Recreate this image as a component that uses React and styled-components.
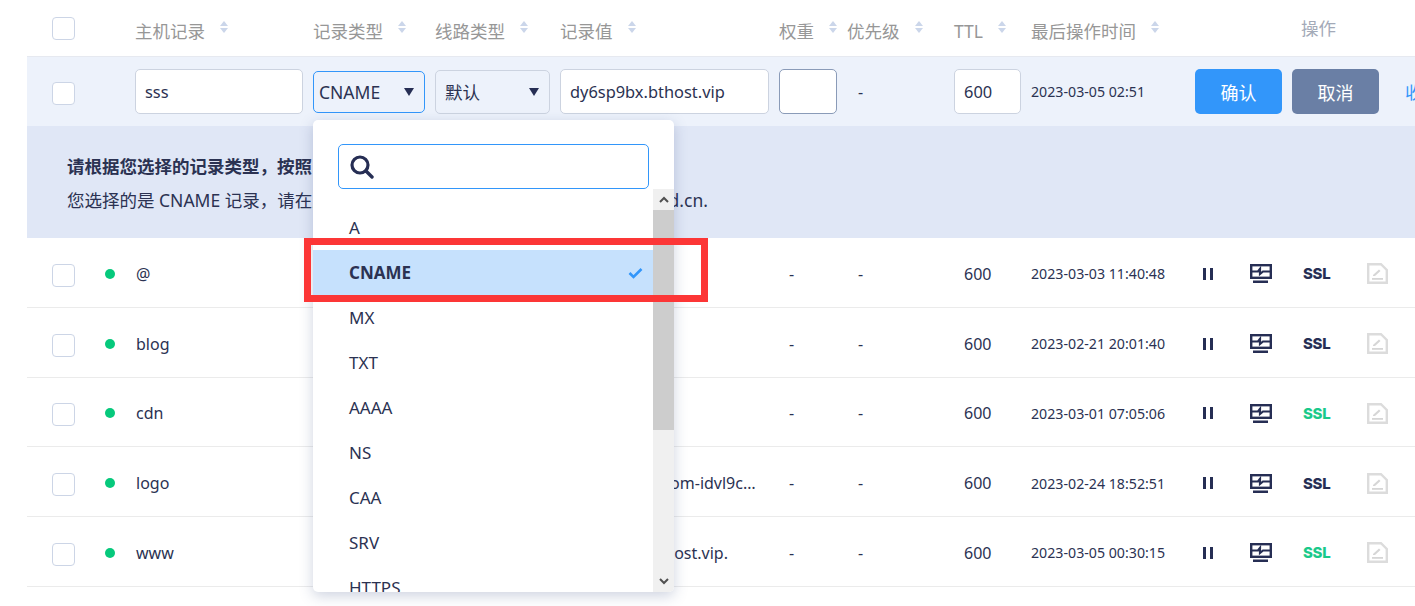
import styled, { createGlobalStyle } from 'styled-components';

const GlobalStyle = createGlobalStyle`
html, body {
    margin: 0;
    padding: 0;
    background: #fff;
    overflow: hidden;
}
body {
    font-family: "Noto Sans", "Noto Sans CJK SC", sans-serif;
    color: #2b3252;
}
`;

const records = [
    { host: '@', value: 'd6.bthost.vip', time: '2023-03-03 11:40:48' },
    { host: 'blog', value: 'd6.bthost.vip', time: '2023-02-21 20:01:40' },
    { host: 'cdn', value: 'd6.bthost.vip', time: '2023-03-01 07:05:06', sslOn: true },
    { host: 'logo', value: 'logo.aliyuncs.com-idvl9cxxxxxx', time: '2023-02-24 18:52:51' },
    { host: 'www', value: 'dy6isp9bxx.bthost.vip.', time: '2023-03-05 00:30:15', sslOn: true },
];

const columns = ['主机记录', '记录类型', '线路类型', '记录值', '权重', '优先级', 'TTL', '最后操作时间'];
const typeOptions = ['A', 'CNAME', 'MX', 'TXT', 'AAAA', 'NS', 'CAA', 'SRV', 'HTTPS'];

const SortIcon = () => (
    <SortSvg width="8" height="12" viewBox="0 0 8 12">
        <path d="M4 0 L8 5 H0 Z" fill="#cbd6ea" />
        <path d="M4 12 L8 7 H0 Z" fill="#cbd6ea" />
    </SortSvg>
);

const PauseIcon = () => (
    <svg width="10" height="12" viewBox="0 0 10 12">
        <rect x="0" y="0" width="3" height="12" fill="#262e54" />
        <rect x="7" y="0" width="3" height="12" fill="#262e54" />
    </svg>
);

const MonitorIcon = () => (
    <svg width="22" height="19" viewBox="0 0 22 19">
        <rect x="1.2" y="1.2" width="19.6" height="12.6" fill="#fff" stroke="#262e54" strokeWidth="2.4" />
        <path d="M2 7.5 H8 L10 5 V10 L13 7.5 H20" fill="none" stroke="#262e54" strokeWidth="2.2" />
        <rect x="3" y="16.5" width="15" height="2.5" fill="#262e54" />
    </svg>
);

const EditIcon = () => (
    <svg width="21" height="21" viewBox="0 0 21 21">
        <path d="M1.2 1.2 H14 L19.8 7 V19.8 H1.2 Z" fill="none" stroke="#dcdcdc" strokeWidth="2.4" />
        <path d="M6 12 L12 6.5 L13.5 8 L8 13 H6 Z" fill="#d6d6d6" />
        <rect x="5" y="15" width="11" height="1.8" fill="#d6d6d6" />
    </svg>
);

const SearchIcon = () => (
    <svg width="24" height="24" viewBox="0 0 24 24">
        <circle cx="10" cy="10" r="8" fill="none" stroke="#262e54" strokeWidth="3.2" />
        <path d="M16 16 L22 22" stroke="#262e54" strokeWidth="3.4" strokeLinecap="round" />
    </svg>
);

const App = () => {
    return (
        <>
            <GlobalStyle />
            <Page>
                <Table>
                    <HeaderRow>
                        <CheckCell><Checkbox /></CheckCell>
                        {columns.map((name) => (
                            <HeaderCell key={name} $pull={name === '优先级'}>{name}<SortIcon /></HeaderCell>
                        ))}
                        <OpsHeader>操作</OpsHeader>
                    </HeaderRow>

                    <EditRow>
                        <CheckCell $pad={4}><Checkbox /></CheckCell>
                        <Cell><TextField $width="168px" defaultValue="sss" /></Cell>
                        <Cell><SelectBox $width="112px" $active>CNAME<Caret /></SelectBox></Cell>
                        <Cell><SelectBox $width="115px">默认<Caret /></SelectBox></Cell>
                        <Cell><TextField $width="209px" defaultValue="dy6sp9bx.bthost.vip" /></Cell>
                        <Cell><TextField $width="58px" $dark /></Cell>
                        <DashCell>-</DashCell>
                        <Cell><TextField $width="67px" defaultValue="600" /></Cell>
                        <TimeCell>2023-03-05 02:51</TimeCell>
                        <EditActions>
                            <ActionButton $bg="#3296fa">确认</ActionButton>
                            <ActionButton $bg="#6a7fa5">取消</ActionButton>
                            <CollapseLink>收起</CollapseLink>
                        </EditActions>
                    </EditRow>

                    <TipPanel>
                        <TipTitle>请根据您选择的记录类型，按照以下说明填写记录值</TipTitle>
                        <TipText>您选择的是 CNAME 记录，请在上方记录值处填写目标域名 www.baihan-cloud.cn.</TipText>
                    </TipPanel>

                    {records.map((r) => (
                        <DataRow key={r.host}>
                            <CheckCell $pad={3}><Checkbox /></CheckCell>
                            <HostCell><StatusDot />{r.host}</HostCell>
                            <Cell />
                            <Cell />
                            <ValueCell>{r.value}</ValueCell>
                            <DashCell $first>-</DashCell>
                            <DashCell>-</DashCell>
                            <TtlCell>600</TtlCell>
                            <TimeCell>{r.time}</TimeCell>
                            <OpsCell>
                                <PauseIcon />
                                <MonitorIcon />
                                <SslLabel $on={r.sslOn}>SSL</SslLabel>
                                <EditIcon />
                            </OpsCell>
                        </DataRow>
                    ))}
                </Table>

                <Dropdown>
                    <SearchBox><SearchIcon /></SearchBox>
                    <OptionArea>
                        <OptionList>
                            {typeOptions.map((opt) => (
                                <Option key={opt} $selected={opt === 'CNAME'}>
                                    {opt}
                                    {opt === 'CNAME' && (
                                        <svg width="15" height="12" viewBox="0 0 15 12">
                                            <path d="M1.5 6 L5.5 10 L13.5 2" fill="none" stroke="#3296fa" strokeWidth="2.6" />
                                        </svg>
                                    )}
                                </Option>
                            ))}
                        </OptionList>
                        <Scrollbar>
                            <ScrollArrow>
                                <svg width="10" height="7" viewBox="0 0 10 7"><path d="M1 6 L5 2 L9 6" fill="none" stroke="#505050" strokeWidth="2" /></svg>
                            </ScrollArrow>
                            <ScrollThumb />
                            <ScrollTrack />
                            <ScrollArrow>
                                <svg width="10" height="7" viewBox="0 0 10 7"><path d="M1 1 L5 5 L9 1" fill="none" stroke="#505050" strokeWidth="2" /></svg>
                            </ScrollArrow>
                        </Scrollbar>
                    </OptionArea>
                </Dropdown>

                <Highlight />
            </Page>
        </>
    );
};

const Page = styled.main`
position: relative;
width: 1415px;
height: 606px;
overflow: hidden;
`;

const Table = styled.div`
margin-left: 27px;
width: 1388px;
`;

const Row = styled.div`
display: grid;
grid-template-columns: 108px 178px 122px 125px 219px 79px 96px 77px 164px 1fr;
align-items: center;
`;

const HeaderRow = styled(Row)`
height: 56px;
border-bottom: 1px solid #e6e9f0;
`;

const EditRow = styled(Row)`
height: 69px;
background: #edf2fb;
`;

const DataRow = styled(Row)`
box-sizing: border-box;
height: 69.75px;
padding-top: 3px;
border-bottom: 1px solid #ebebeb;
font-size: 16px;
`;

const CheckCell = styled.div`
padding-left: 25px;
padding-top: ${(p) => p.$pad || 0}px;
`;

const Checkbox = styled.div`
width: 21px;
height: 21px;
border: 1px solid #ccd5e6;
border-radius: 4px;
background: #fff;
`;

const HeaderCell = styled.div`
display: flex;
align-items: flex-start;
gap: 15px;
margin-left: ${(p) => (p.$pull ? '-11px' : '0')};
font-size: 17.5px;
line-height: 24px;
padding-top: 6px;
color: #979797;
`;

const SortSvg = styled.svg`
margin-top: 2px;
`;

const OpsHeader = styled.div`
font-size: 17.5px;
color: #a3aab8;
padding-left: 106px;
margin-bottom: 2px;
`;

const Cell = styled.div`
min-width: 0;
`;

const TextField = styled.input`
box-sizing: border-box;
display: block;
width: ${(p) => p.$width};
height: 45px;
padding: 0 9px;
background: #fff;
border: 1px solid ${(p) => (p.$dark ? '#8a9bb8' : '#ccd3e0')};
border-radius: 5px;
font-family: inherit;
font-size: 16.4px;
color: #2b3252;
outline: none;
`;

const SelectBox = styled.div`
box-sizing: border-box;
display: flex;
align-items: center;
justify-content: space-between;
width: ${(p) => p.$width};
height: ${(p) => (p.$active ? '42px' : '44px')};
padding: 0 10px 0 ${(p) => (p.$active ? '5px' : '9px')};
background: #edf2fb;
border: 1px solid ${(p) => (p.$active ? '#3296fa' : '#ccd3e0')};
border-radius: 5px;
font-size: 17.5px;
`;

const Caret = styled.span`
width: 0;
height: 0;
border-left: 5px solid transparent;
border-right: 5px solid transparent;
border-top: 8px solid #262e54;
`;

const DashCell = styled.div`
font-size: 16px;
padding-left: ${(p) => (p.$first ? '10px' : '0')};
`;

const TimeCell = styled.div`
font-size: 14.2px;
white-space: nowrap;
`;

const EditActions = styled.div`
display: flex;
align-items: center;
gap: 10px;
white-space: nowrap;
`;

const ActionButton = styled.button`
width: 87px;
height: 45px;
border: 0;
border-radius: 5px;
background: ${(p) => p.$bg};
color: #fff;
font-family: inherit;
font-size: 18px;
`;

const CollapseLink = styled.span`
margin-left: 16px;
font-size: 17.5px;
color: #3296fa;
`;

const TipPanel = styled.div`
box-sizing: border-box;
height: 112px;
padding: 23px 0 0 40px;
background: #e0e7f6;
font-size: 17.5px;
line-height: 34px;
`;

const TipTitle = styled.div`
font-weight: 700;
white-space: nowrap;
`;

const TipText = styled.div`
white-space: nowrap;
`;

const HostCell = styled.div`
display: flex;
align-items: center;
`;

const StatusDot = styled.span`
width: 10px;
height: 10px;
border-radius: 50%;
background: #06c97c;
margin-left: -30px;
margin-right: 21px;
`;

const ValueCell = styled.div`
overflow: hidden;
text-overflow: ellipsis;
white-space: nowrap;
width: 198px;
`;

const TtlCell = styled.div`
padding-left: 10px;
`;

const OpsCell = styled.div`
display: grid;
grid-template-columns: 47px 53px 64px auto;
align-items: center;
padding-left: 8px;
`;

const SslLabel = styled.span`
font-family: "Inter", sans-serif;
font-size: 15px;
font-weight: 800;
letter-spacing: -0.3px;
color: ${(p) => (p.$on ? '#1ac98a' : '#262e54')};
`;

const Dropdown = styled.div`
position: absolute;
left: 313px;
top: 120px;
width: 361px;
height: 472px;
background: #fff;
border-radius: 5px;
box-shadow: 0 4px 14px rgba(60, 80, 130, 0.25);
overflow: hidden;
display: flex;
flex-direction: column;
`;

const SearchBox = styled.div`
box-sizing: border-box;
flex: none;
display: flex;
align-items: center;
width: 311px;
height: 45px;
margin: 24px 0 0 25px;
padding-left: 11px;
border: 1px solid #3296fa;
border-radius: 5px;
`;

const OptionArea = styled.div`
flex: 1;
min-height: 0;
display: flex;
`;

const OptionList = styled.div`
flex: 1;
min-width: 0;
overflow: hidden;
padding-top: 16px;
`;

const Option = styled.div`
box-sizing: border-box;
display: flex;
align-items: center;
justify-content: space-between;
height: 45px;
padding: 0 10px 0 36px;
font-size: 17px;
font-weight: ${(p) => (p.$selected ? 700 : 400)};
background: ${(p) => (p.$selected ? '#c6e1fd' : 'transparent')};
`;

const Scrollbar = styled.div`
flex: none;
width: 21px;
display: flex;
flex-direction: column;
background: #f0f0f0;
`;

const ScrollArrow = styled.div`
flex: none;
height: 21px;
display: flex;
align-items: center;
justify-content: center;
`;

const ScrollThumb = styled.div`
flex: none;
height: 220px;
background: #cdcdcd;
`;

const ScrollTrack = styled.div`
flex: 1;
`;

const Highlight = styled.div`
position: absolute;
box-sizing: border-box;
left: 304px;
top: 238px;
width: 404px;
height: 64px;
border: 7px solid #fc3636;
`;

export default App;
